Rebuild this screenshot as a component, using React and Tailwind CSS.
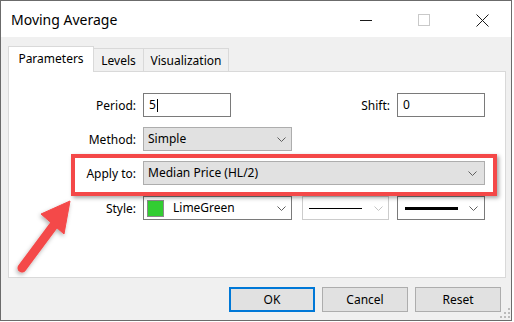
import React from 'react'

function Chevron({ color = '#5f5f5f' }) {
  return (
    <svg width="9" height="5" viewBox="0 0 9 5" className="shrink-0">
      <path d="M0.5 0.5 L4.5 4.5 L8.5 0.5" fill="none" stroke={color} strokeWidth="1" />
    </svg>
  )
}

function Label({ children, w = 'w-[127px]' }) {
  return <span className={`${w} text-right pt-px shrink-0`}>{children}</span>
}

function Btn({ children, primary }) {
  return (
    <button className={`w-[86px] h-[25px] bg-[#e1e1e1] flex items-center justify-center text-[12px] ${primary ? 'border-2 border-[#0078d7]' : 'border border-[#adadad]'}`}>
      {children}
    </button>
  )
}

export default function App() {
  return (
    <div className="w-[514px] h-[322px] bg-white relative overflow-hidden font-['Noto_Sans',sans-serif] text-black text-[12px] leading-[16px]">
      <div className="w-[512px] h-[321px] border border-[#6b6b6b] bg-[#f0f0f0] flex flex-col">

        {/* title bar */}
        <div className="h-[36px] bg-white flex items-center shrink-0">
          <span className="pl-[10px] text-[14px] leading-[20px] pt-[2px]">Moving Average</span>
          <div className="ml-auto flex h-full">
            <div className="w-[58px] flex items-center justify-center pt-[2px]">
              <span className="w-[12px] h-px bg-[#1a1a1a]" />
            </div>
            <div className="w-[58px] flex items-center justify-center pt-[2px]">
              <span className="w-[12px] h-[12px] border border-[#c9c9c9]" />
            </div>
            <div className="w-[58px] flex items-center justify-center pt-[2px]">
              <svg width="13" height="13" viewBox="0 0 13 13">
                <path d="M0.5 0.5 L12.5 12.5 M12.5 0.5 L0.5 12.5" stroke="#1a1a1a" strokeWidth="1" />
              </svg>
            </div>
          </div>
        </div>

        {/* body */}
        <div className="flex-1 pl-[7px] pr-[5px] pt-[9px] flex flex-col">
          <div className="flex items-end h-[25px]">
            <div className="w-[86px] h-[26px] -mb-px relative z-10 bg-white border-x border-t border-[#d9d9d9] text-center pt-[4px]">Parameters</div>
            <div className="w-[50px] h-[23px] border-r border-t border-[#d9d9d9] text-center pt-[4px]">Levels</div>
            <div className="w-[85px] h-[23px] border-r border-t border-[#d9d9d9] text-center pt-[4px]">Visualization</div>
          </div>

          <div className="h-[207px] bg-white border border-[#d9d9d9] pt-[21px]">
            {/* period / shift */}
            <div className="flex items-center h-[24px]">
              <Label>Period:</Label>
              <div className="ml-[7px] w-[88px] h-[24px] border border-[#7a7a7a] flex items-center pl-[5px]">
                <span>5</span>
                <span className="w-px h-[13px] bg-black ml-px" />
              </div>
              <Label w="w-[159px]">Shift:</Label>
              <div className="ml-[7px] w-[88px] h-[24px] border border-[#7a7a7a] flex items-center pl-[5px]">0</div>
            </div>

            {/* method */}
            <div className="flex items-center h-[24px] mt-[10px]">
              <Label>Method:</Label>
              <div className="ml-[7px] w-[149px] h-[24px] bg-[#e1e1e1] border border-[#adadad] flex items-center pl-[4px] pr-[5px]">
                <span className="flex-1">Simple</span>
                <Chevron />
              </div>
            </div>

            {/* apply to */}
            <div className="flex items-center h-[24px] mt-[10px]">
              <Label>Apply to:</Label>
              <div className="ml-[7px] w-[342px] h-[24px] bg-[#e1e1e1] border border-[#adadad] flex items-center pl-[4px] pr-[7px]">
                <span className="flex-1">Median Price (HL/2)</span>
                <Chevron />
              </div>
            </div>

            {/* style */}
            <div className="flex items-center h-[24px] mt-[11px]">
              <Label>Style:</Label>
              <div className="ml-[7px] w-[149px] h-[24px] bg-white border border-[#7a7a7a] flex items-center pl-[3px] pr-[5px]">
                <span className="w-[17px] h-[17px] bg-[#32cd32] border border-[#8a8a8a] shrink-0" />
                <span className="flex-1 ml-[9px]">LimeGreen</span>
                <Chevron />
              </div>
              <div className="ml-[10px] w-[87px] h-[24px] bg-white border border-[#cccccc] flex items-center pl-[6px] pr-[5px]">
                <span className="w-[53px] h-px bg-black" />
                <span className="flex-1" />
                <Chevron color="#c4c4c4" />
              </div>
              <div className="ml-[8px] w-[88px] h-[24px] bg-white border border-[#7a7a7a] flex items-center pl-[7px] pr-[6px]">
                <span className="w-[53px] h-[3px] bg-black" />
                <span className="flex-1" />
                <Chevron />
              </div>
            </div>
          </div>

          {/* buttons */}
          <div className="flex justify-end gap-[7px] mt-[9px] pr-[5px]">
            <Btn primary>OK</Btn>
            <Btn>Cancel</Btn>
            <Btn>Reset</Btn>
          </div>
        </div>
      </div>

      {/* annotation box */}
      <div className="absolute left-[71px] top-[154px] w-[426px] h-[42px] border-4 border-[#f44848] shadow-[2px_2px_4px_rgba(0,0,0,0.35)]" />

      {/* annotation arrow + resize grip */}
      <svg className="absolute left-0 top-0 pointer-events-none" width="514" height="322" viewBox="0 0 514 322">
        <defs>
          <filter id="sh" x="-50%" y="-50%" width="200%" height="200%">
            <feDropShadow dx="-1" dy="2" stdDeviation="2" floodColor="#000" floodOpacity="0.3" />
          </filter>
        </defs>
        <g filter="url(#sh)" fill="#f44848" stroke="#f44848">
          <path d="M22 268 L54 225" strokeWidth="9" strokeLinecap="round" fill="none" />
          <path d="M70 201 L41 214 L64 234 Z" strokeWidth="1" strokeLinejoin="round" />
        </g>
        <g fill="#bcbcbc">
          <rect x="508" y="308" width="2" height="2" />
          <rect x="504" y="312" width="2" height="2" />
          <rect x="508" y="312" width="2" height="2" />
          <rect x="500" y="316" width="2" height="2" />
          <rect x="504" y="316" width="2" height="2" />
          <rect x="508" y="316" width="2" height="2" />
        </g>
      </svg>
    </div>
  )
}
